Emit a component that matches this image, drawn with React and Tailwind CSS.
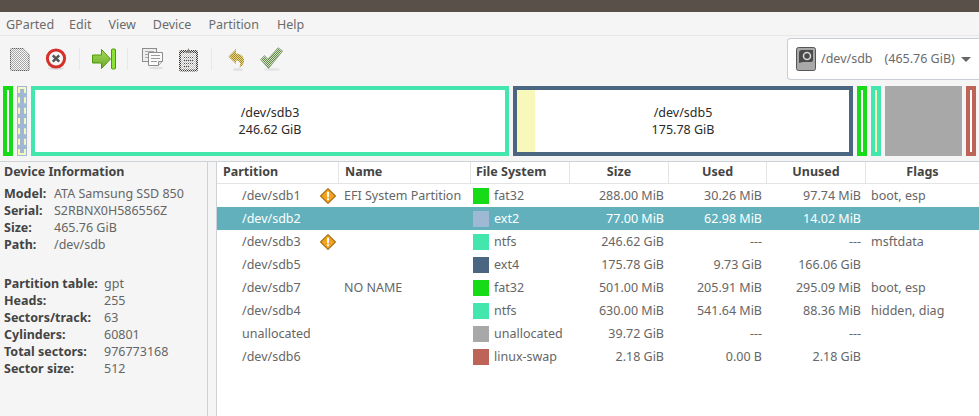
const font = { fontFamily: '"Noto Sans", "Open Sans", sans-serif' };

function Checker({ id, color, bg = "#f5f5f5" }) {
  return (
    <pattern id={id} width="2" height="2" patternUnits="userSpaceOnUse">
      <rect width="2" height="2" fill={bg} />
      <rect width="1" height="1" fill={color} />
      <rect x="1" y="1" width="1" height="1" fill={color} />
    </pattern>
  );
}

const Sep = () => <div className="w-px h-[22px] bg-[#e8e8e8]" />;

function NewIcon() {
  return (
    <svg width="20" height="23" viewBox="0 0 20 23" className="block">
      <defs>
        <Checker id="c1" color="#a6a6a6" bg="#f7f7f7" />
        <Checker id="c1b" color="#5c5c5c" bg="#d0d0d0" />
      </defs>
      <path d="M.5 1.500a1 1 0 0 1 1-1h12l5.500 5.500v15.500a1 1 0 0 1-1 1h-16.500a1 1 0 0 1-1-1z" fill="url(#c1)" stroke="url(#c1b)" strokeWidth="1" />
    </svg>
  );
}
function StopIcon() {
  return (
    <svg width="22" height="22" viewBox="0 0 22 22" className="block">
      <ellipse cx="11" cy="20.500" rx="8" ry="1.500" fill="#dddddd" />
      <circle cx="11" cy="10.500" r="8.600" fill="#f6f6f6" stroke="#d5302c" strokeWidth="3" />
      <path d="M7.800 7.300l6.400 6.400M14.200 7.300l-6.400 6.400" stroke="#555555" strokeWidth="2.600" />
    </svg>
  );
}
function ApplyAllIcon() {
  return (
    <svg width="24" height="22" viewBox="0 0 24 22" className="block">
      <defs>
        <linearGradient id="g1" x1="0" y1="0" x2="0" y2="1">
          <stop offset="0" stopColor="#a8dc5c" />
          <stop offset="1" stopColor="#68a82a" />
        </linearGradient>
      </defs>
      <path d="M.5 7h9V1.500L18.500 11 9.500 20.500V15h-9z" fill="url(#g1)" stroke="#4e9a06" strokeWidth="1" />
      <rect x="19.500" y="1" width="4" height="20" rx="1" fill="#8ae234" stroke="#4e9a06" />
    </svg>
  );
}
function CopyIcon() {
  return (
    <svg width="22" height="22" viewBox="0 0 22 22" className="block">
      <ellipse cx="14" cy="20" rx="7" ry="1.500" fill="#e0e0e0" />
      <rect x="0.500" y="0.500" width="14" height="13" fill="#eeeeee" stroke="#8c8c8c" />
      <path d="M3 3.500h9M3 6.500h9M3 9.500h5" stroke="#a8a8a8" />
      <path d="M6.500 4.500h14v9l-4 4h-10z" fill="#fafafa" stroke="#8c8c8c" />
      <path d="M9 7.500h9M9 10.500h9M9 13.500h6" stroke="#9a9a9a" />
      <path d="M16.500 17.500v-4h4" fill="#dddddd" stroke="#8c8c8c" />
    </svg>
  );
}
function PasteIcon() {
  return (
    <svg width="21" height="25" viewBox="0 0 21 25" className="block">
      <defs>
        <Checker id="c2" color="#3f3835" bg="#e6e4e2" />
        <Checker id="c2b" color="#bdbdbd" bg="#f7f7f7" />
      </defs>
      <rect x="1" y="3" width="19" height="21.500" rx="2" fill="url(#c2)" />
      <path d="M7 4.500h2l1.500-3.500 1.500 3.500h2v2.500H7z" fill="#8a8a8a" />
      <rect x="3" y="6" width="15" height="16.500" fill="url(#c2b)" />
      <path d="M6 10.500h9M6 13.500h9M6 16.500h9M6 19.500h6" stroke="#555555" strokeDasharray="1 1" />
    </svg>
  );
}
function UndoIcon() {
  return (
    <svg width="17" height="23" viewBox="0 0 17 23" className="block">
      <defs><Checker id="c3" color="#a68a24" bg="#e4d68e" /></defs>
      <ellipse cx="10" cy="21.500" rx="5" ry="1.500" fill="#e2e2e2" />
      <path d="M.5 8.500L8 1v4.500c4.500 0 8 3 8 7 0 3.500-2 5.800-5 7 1.300-2 1.500-3.300 1-4.800-.6-1.700-2.500-2.200-4-2.200V16z" fill="url(#c3)" />
    </svg>
  );
}
function CheckIcon() {
  return (
    <svg width="23" height="24" viewBox="0 0 23 24" className="block">
      <defs><Checker id="c4" color="#5f8a48" bg="#d3e0c6" /></defs>
      <ellipse cx="12" cy="22.500" rx="9" ry="1.500" fill="#e4e4e4" />
      <path d="M.5 12.500L4.500 8.500 8 12 18 .7 22.700 4 8.500 21.500z" fill="url(#c4)" stroke="#8aa080" strokeWidth="0.800" strokeLinejoin="round" />
    </svg>
  );
}
function DriveIcon() {
  return (
    <svg width="20" height="24" viewBox="0 0 20 24" className="block">
      <rect x="0.500" y="0.500" width="19" height="23" rx="2" fill="#a8a8a8" stroke="#555555" />
      <path d="M3 6a3 3 0 0 1 3-3h11v10a2 2 0 0 1-2 2H7l-4 1z" fill="#4a4a4a" />
      <circle cx="11" cy="9" r="3.500" fill="#4a4a4a" stroke="#d8d8d8" strokeWidth="1.600" />
    </svg>
  );
}
function WarnIcon() {
  return (
    <svg width="16" height="16" viewBox="0 0 16 16" className="block">
      <path d="M8 .6L15.400 8 8 15.400.6 8z" fill="#f6a21e" stroke="#a66f12" strokeWidth="1.100" strokeLinejoin="round" />
      <rect x="7" y="3.800" width="2" height="5.400" fill="#ffffff" />
      <rect x="7" y="10.200" width="2" height="2" fill="#ffffff" />
    </svg>
  );
}

function Part({ w, color, name, size, used, usedColor = "#f8f8ba" }) {
  return (
    <div className="h-[70px] shrink-0 border-[4px] bg-white flex relative" style={{ width: w, borderColor: color }}>
      {used ? <div className="h-full" style={{ width: used, background: usedColor }} /> : null}
      {name ? (
        <div className="absolute inset-0 flex flex-col items-center justify-center text-[12.5px] leading-[17px] text-[#2a2a2a]">
          <span>{name}</span>
          <span>{size}</span>
        </div>
      ) : null}
    </div>
  );
}

const infoA = [
  ["Model:", "ATA Samsung SSD 850"],
  ["Serial:", "S2RBNX0H586556Z"],
  ["Size:", "465.76 GiB"],
  ["Path:", "/dev/sdb"],
];
const infoB = [
  ["Partition table:", "gpt"],
  ["Heads:", "255"],
  ["Sectors/track:", "63"],
  ["Cylinders:", "60801"],
  ["Total sectors:", "976773168"],
  ["Sector size:", "512"],
];

const rows = [
  ["/dev/sdb1", true, "EFI System Partition", "#18db18", "fat32", "288.00 MiB", "30.26 MiB", "97.74 MiB", "boot, esp"],
  ["/dev/sdb2", false, "", "#9fb8d3", "ext2", "77.00 MiB", "62.98 MiB", "14.02 MiB", ""],
  ["/dev/sdb3", true, "", "#43e6ac", "ntfs", "246.62 GiB", "---", "---", "msftdata"],
  ["/dev/sdb5", false, "", "#4a6681", "ext4", "175.78 GiB", "9.73 GiB", "166.06 GiB", ""],
  ["/dev/sdb7", false, "NO NAME", "#18db18", "fat32", "501.00 MiB", "205.91 MiB", "295.09 MiB", "boot, esp"],
  ["/dev/sdb4", false, "", "#43e6ac", "ntfs", "630.00 MiB", "541.64 MiB", "88.36 MiB", "hidden, diag"],
  ["unallocated", false, "", "#a8a8a8", "unallocated", "39.72 GiB", "---", "---", ""],
  ["/dev/sdb6", false, "", "#bd6357", "linux-swap", "2.18 GiB", "0.00 B", "2.18 GiB", ""],
];

const grid = "grid grid-cols-[122px_132px_99px_99px_98px_99px_1fr]";
const heads = ["Partition", "Name", "File System", "Size", "Used", "Unused", "Flags"];

export default function App() {
  return (
    <div className="w-[979px] h-[416px] overflow-hidden bg-[#f5f5f5] text-[12.5px] text-[#666666] flex flex-col" style={font}>
      <div className="h-3 shrink-0 bg-[#5a504a]" />
      <div className="h-[24px] shrink-0 flex items-center pl-[6px] pt-[3px] border-b border-[#e8e8e8] text-[#6b6b6b]">
        <span>GParted</span>
        <span className="ml-[15px]">Edit</span>
        <span className="ml-[17px]">View</span>
        <span className="ml-[17px]">Device</span>
        <span className="ml-[17px]">Partition</span>
        <span className="ml-[18px]">Help</span>
      </div>
      <div className="h-[50px] shrink-0 flex items-center">
        <div className="flex items-center w-[787px] pl-[10px] pb-[4px]">
          <NewIcon />
          <div className="w-[15px]" />
          <StopIcon />
          <div className="w-[12px]" />
          <Sep />
          <div className="w-[12px]" />
          <ApplyAllIcon />
          <div className="w-[11px]" />
          <Sep />
          <div className="w-[14px]" />
          <CopyIcon />
          <div className="w-[14px]" />
          <PasteIcon />
          <div className="w-[12px]" />
          <Sep />
          <div className="w-[16px]" />
          <UndoIcon />
          <div className="w-[15px]" />
          <CheckIcon />
        </div>
        <div className="w-[192px] h-[42px] mb-[4px] rounded-l-[4px] border border-r-0 border-[#c8ced3] bg-white flex items-center pl-[8px] text-[#6b6b6b]">
          <DriveIcon />
          <span className="ml-[5px]">/dev/sdb</span>
          <span className="ml-[12px]">(465.76 GiB)</span>
          <span className="ml-[6px] w-0 h-0 border-x-[5px] border-x-transparent border-t-[5px] border-t-[#666666]" />
        </div>
      </div>
      <div className="h-[70px] shrink-0 flex gap-[4px] pl-[3px]">
        <Part w={10} color="#18db18" />
        <div className="h-[70px] w-[10px] shrink-0 bg-[#a0b8d4] px-[1px] py-[1px]">
          <div className="h-full w-full border-[2px] border-dashed border-[#f8f8ba]" />
        </div>
        <Part w={478} color="#43e6ac" name="/dev/sdb3" size="246.62 GiB" />
        <Part w={340} color="#4a6681" name="/dev/sdb5" size="175.78 GiB" used={18} />
        <Part w={10} color="#18db18" />
        <Part w={10} color="#43e6ac" used={2} />
        <div className="h-[70px] w-[77px] shrink-0 bg-[#a8a8a8]" />
        <Part w={10} color="#bd6357" />
      </div>
      <div className="h-[5px] shrink-0" />
      <div className="flex-1 flex min-h-0 border-t border-[#cdd2d6]">
        <aside className="w-[208px] shrink-0 border-r border-[#cdd2d6] pl-[4px]">
          <div className="font-bold text-[#444444] leading-[19px]">Device Information</div>
          <div className="mt-[5px]">
            {infoA.map(([k, v]) => (
              <div key={k} className="flex h-[17px] items-center">
                <span className="w-[50px] font-bold text-[#444444]">{k}</span>
                <span>{v}</span>
              </div>
            ))}
          </div>
          <div className="mt-[22px]">
            {infoB.map(([k, v]) => (
              <div key={k} className="flex h-[17px] items-center">
                <span className="w-[100px] font-bold text-[#444444] whitespace-nowrap">{k}</span>
                <span>{v}</span>
              </div>
            ))}
          </div>
        </aside>
        <div className="w-[8px] shrink-0" />
        <main className="flex-1 bg-white border-l border-[#cdd2d6] min-w-0">
          <div className={grid + " h-[22px] border-b border-[#e4e4e4] font-bold text-[#444444]"}>
            {heads.map((h, i) => (
              <div key={h} className={(i === 6 ? "" : "border-r border-[#e4e4e4] ") + "flex items-center " + (i === 2 ? "px-[5px] " : "px-[6px] ") + (i > 2 ? "justify-center" : "")}>{h}</div>
            ))}
          </div>
          {rows.map((r) => {
            const sel = r[0] === "/dev/sdb2";
            return (
              <div key={r[0]} className={grid + " h-[23px] items-center " + (sel ? "bg-[#62b0bc] text-white" : "")}>
                <div className="flex items-center pl-[25px] pr-[3px] justify-between">
                  <span className="pt-[2px]">{r[0]}</span>
                  {r[1] ? <WarnIcon /> : null}
                </div>
                <div className="pl-[5px] pt-[2px] whitespace-nowrap">{r[2]}</div>
                <div className="flex items-center gap-[5px] pl-[2px]">
                  <span className="w-4 h-4 shrink-0" style={{ background: r[3] }} />
                  <span className="pt-[2px]">{r[4]}</span>
                </div>
                <div className="text-right pr-[5px] pt-[2px]">{r[5]}</div>
                <div className="text-right pr-[5px] pt-[2px]">{r[6]}</div>
                <div className="text-right pr-[5px] pt-[2px]">{r[7]}</div>
                <div className="pl-[5px] pt-[2px]">{r[8]}</div>
              </div>
            );
          })}
        </main>
      </div>
    </div>
  );
}
